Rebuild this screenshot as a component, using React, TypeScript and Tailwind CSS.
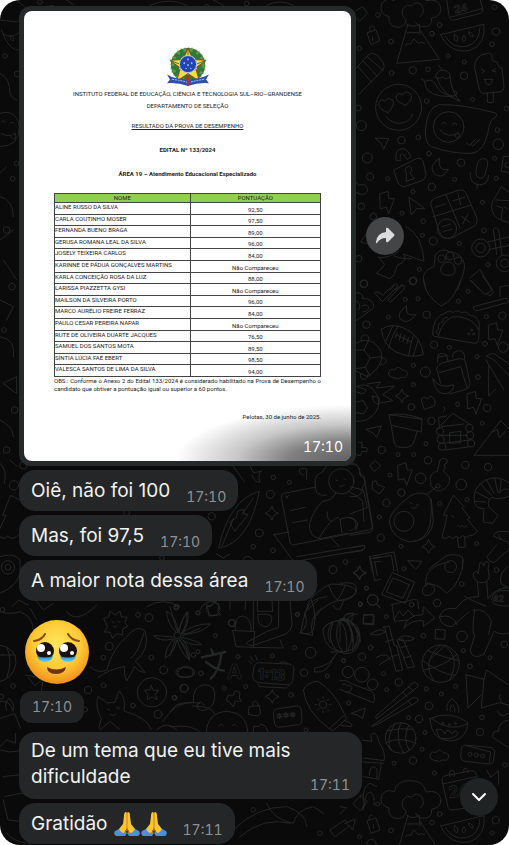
import React from "react";
import { ChevronDown } from "lucide-react";

const results = [
    ["ALINE RUSSO DA SILVA", "92,50"],
    ["CARLA COUTINHO MOSER", "97,50"],
    ["FERNANDA BUENO BRAGA", "89,00"],
    ["GERUSA ROMANA LEAL DA SILVA", "96,00"],
    ["JOSELY TEIXEIRA CARLOS", "84,00"],
    ["KARINNE DE PÁDUA GONÇALVES MARTINS", "Não Compareceu"],
    ["KARLA CONCEIÇÃO ROSA DA LUZ", "88,00"],
    ["LARISSA PIAZZETTA GYSI", "Não Compareceu"],
    ["MAILSON DA SILVEIRA PORTO", "96,00"],
    ["MARCO AURÉLIO FREIRE FERRAZ", "84,00"],
    ["PAULO CESAR PEREIRA NAPAR", "Não Compareceu"],
    ["RUTE DE OLIVEIRA DUARTE JACQUES", "76,50"],
    ["SAMUEL DOS SANTOS MOTA", "89,50"],
    ["SÍNTIA LÚCIA FAÉ EBERT", "98,50"],
    ["VALESCA SANTOS DE LIMA DA SILVA", "94,00"],
];

const Dots = ({ at }: { at: number[][] }) => (
    <>
        {at.map(([x, y, r]) => (
            <circle key={`${x}-${y}`} cx={x} cy={y} r={r} />
        ))}
    </>
);

const Bolt = ({ x, y }: { x: number; y: number }) => (
    <path d={`M${x} ${y}l24 -8 3 22 16 0 -17 46 -7 -20 -17 4z`} />
);

const Pointer = ({ x, y }: { x: number; y: number }) => (
    <path d={`M${x} ${y}l40 2 -15 32 -7 -17z`} />
);

const Spark = ({ x, y }: { x: number; y: number }) => (
    <path d={`M${x} ${y - 20}q3 15 20 20q-17 4 -20 20q-4 -16 -20 -20q16 -5 20 -20z`} />
);

const Cloud = ({ x, y }: { x: number; y: number }) => (
    <path d={`M${x} ${y}q-20 -2 -18 -16q4 -14 18 -8q10 -16 22 0q18 0 16 14q-4 12 -18 8q-8 8 -20 2z`} />
);

const Volcano = () => (
    <>
        <path d="M143 82q-30 -2 -26 -32q-32 -8 -22 -38q14 -22 38 -10q4 -34 46 -34q44 0 48 34q40 -8 46 22q0 26 -28 30q2 30 -28 26q-14 0 -20 -14" />
        <path d="M143 82q20 0 26 -22q-18 -14 -10 -34q14 -16 26 -8q12 -18 30 -2q12 22 -4 34M174 72l-34 118 128 -12 -58 -88M172 98h36M170 72q20 14 38 0l2 32M166 136q10 -10 14 -2l12 -18 12 14q10 -6 20 0" />
    </>
);

const Melon = () => (
    <>
        <path d="M272 104l130 -31q6 62 -42 78q-60 12 -88 -47zM286 109q22 38 64 30q38 -10 40 -56" />
        <path d="M314 104q14 4 8 20q-14 -2 -8 -20zM342 107q10 8 0 18q-12 -6 0 -18zM356 96q14 2 14 14q-14 0 -14 -14z" />
    </>
);

// Doodles are written on a grid three times finer than the page.
const Wallpaper = () => (
    <svg
        aria-hidden="true"
        viewBox="0 0 509 845"
        preserveAspectRatio="xMidYMid slice"
        className="absolute inset-0 h-full w-full"
        fill="none"
        stroke="#252626"
        strokeWidth="3"
        strokeLinecap="round"
        strokeLinejoin="round"
    >
        <g transform="translate(350 0) scale(.3333)">
            <Volcano />
            <Melon />
            <path d="M290 0l8 52q4 12 14 8l80 -20q10 -4 6 -14l-10 -34M300 52l96 -26" />
            <text x="314" y="40" fontSize="32" fontFamily="Inter" fontWeight="700" strokeWidth="2" transform="rotate(-10 314 40)">24</text>
            <path d="M18 32l20 -12 14 20 -24 24 -14 -16M52 98l26 -8 12 32 -26 12zM60 94q-4 -18 6 -16q10 0 8 14M68 110v12" />
            <path d="M0 224l56 -60q10 -8 24 0l20 24q6 12 -2 22l-70 72M24 200l40 46M40 184l42 44M52 170l48 42" />
            <circle cx="146" cy="322" r="69" />
            <path d="M114 338q-28 -10 -28 -26q4 -20 20 -8q6 -14 22 -4q8 16 -14 38zM168 316q-30 -10 -30 -24q4 -16 20 -8q8 -14 22 -4q14 14 -12 36zM108 350q20 22 42 20q30 -2 38 -28" />
            <path d="M214 236l12 8q18 -10 30 8q12 30 50 36q12 2 16 -6q-2 -10 -12 -10M224 244q-2 36 50 44l32 2M256 232q4 -20 20 -22l-10 -14M276 210q20 0 24 18q2 44 30 76q-54 -20 -70 -72q12 8 18 -2q10 12 22 0" />
            <path d="M374 202q-2 -36 38 -42q16 -2 14 14q0 12 16 12q2 18 14 18l6 56q0 16 -16 16l-44 4q-12 0 -14 -12zM412 278v28q8 6 18 0v-30M394 208l10 4 -8 8M438 206l-12 6 12 4M402 238h26M406 240q0 14 12 14q10 -4 8 -14" />
            <path d="M226 398q2 -74 40 -84q70 -2 166 24q14 2 6 12q-20 12 -22 38q-12 68 -50 72q-60 2 -122 -20q-18 -10 -18 -42z" />
            <circle cx="296" cy="381" r="46" />
            <path d="M276 372q6 -10 14 0M306 374q8 -10 14 0M270 390q24 28 56 8l2 12q-12 10 -14 -8M350 428l8 8 20 -18M364 434l4 4 22 -20" />
            <Pointer x={76} y={414} />
            <path d="M132 510l68 -34q16 -4 20 10l8 38q0 14 -12 18l-52 18q-14 0 -20 -12zM138 480q-4 -30 16 -34q20 -2 28 26l-12 6q-8 -18 -16 -16q-6 4 -2 20zM170 502q10 -8 14 2q4 8 -4 14l12 18 -24 8 2 -24q-10 -8 0 -18z" />
            <path d="M268 476q-34 20 -16 44q22 22 44 -12q-34 8 -28 -32zM380 500q4 -26 22 -24q14 2 10 24l-8 26q-6 14 -20 6q-10 -6 -4 -32zM360 518q0 36 28 36q26 2 28 -28M384 554l-4 12" />
            <path d="M478 468l-18 2 -6 44 24 4M470 486l-6 14 14 4M478 578l-24 -18 -16 28q-18 20 -12 44q8 28 52 36M436 600l42 2M440 618l18 6 -4 30M462 620l10 6" />
            <Bolt x={90} y={582} />
            <path d="M178 592l46 34 -24 0 -16 18z" />
            <path d="M242 610q0 -10 14 -16l72 -24q16 -2 22 14l30 68q6 20 -10 28l-66 34q-24 8 -36 -18zM288 584l42 100M250 650l112 -34M256 622l30 -10M310 602l34 -10M324 580l8 34M334 648l26 20M354 642l-16 30" />
            <circle cx="291" cy="686" r="29" />
            <path d="M276 680l26 -8M280 694l26 -6M168 680q50 26 54 104l-62 -22q16 20 -18 34q-10 36 -24 40l-38 -16q14 -12 24 -26l-18 -22q30 4 60 -18M134 768q18 10 50 8M52 696l-20 30 20 6" />
            <path d="M228 870l-8 -38q4 -24 32 -32l4 -36q20 -22 40 -10q40 4 48 40q0 24 -22 76" />
            <path d="M292 786q16 -2 22 16q6 22 -14 24q-28 2 -28 -18q4 -18 20 -22zM358 836l32 -28 36 62M364 842l24 28M120 870l14 -14M136 870l20 -16" />
            <circle cx="300" cy="768" r="12" />
            <circle cx="275" cy="776" r="11" />
            <circle cx="324" cy="782" r="11" />
            <circle cx="392" cy="744" r="27" />
            <circle cx="392" cy="744" r="14" />
            <circle cx="464" cy="790" r="25" />
            <circle cx="464" cy="790" r="12" />
            <path d="M414 726l64 -16M420 748l56 -12M440 764l-10 -76q10 -10 16 2l10 74M18 546l8 10q20 -8 26 10q2 14 -14 18l-20 -6" />
            <Dots at={[[84,45,7],[123,125,7],[28,145,7],[269,75,7],[246,101,7],[438,95,11],[426,133,7],[294,168,6],[343,186,6],[342,227,11],[188,211,11],[234,208,7],[125,219,7],[230,303,7],[368,298,6],[34,377,15],[25,324,9],[154,421,11],[205,412,7],[52,474,15],[237,461,7],[333,488,11],[445,433,16],[442,390,7],[60,530,11],[113,536,6],[245,561,11],[314,538,6],[189,575,6],[34,619,10],[156,640,6],[397,607,6],[220,664,7],[70,650,10],[434,475,6],[250,723,12],[217,706,6],[328,730,6],[402,691,7],[26,776,10],[208,808,6],[188,844,11],[41,852,11],[414,794,6],[439,535,6],[470,326,7],[434,22,7]]} />
        </g>

        <g transform="translate(350 280) scale(.3333)">
            <path d="M74 38q8 -8 24 8l36 -34q14 0 6 10l-42 42zM114 58l42 -42q12 0 6 12l-40 38zM220 0q6 50 54 78q38 -16 58 -78M360 0l46 44 22 -14 -30 -42M410 40l10 8 10 -12M370 80l100 -26 8 12 -96 26q-12 0 -12 -12zM450 50v-30l28 -4" />
            <path d="M170 78q-30 20 -20 38q20 22 48 -12q-36 6 -28 -26zM94 148q30 -22 72 -2q48 24 54 78q-40 12 -82 -8q-40 -22 -44 -68zM128 138q-10 18 -22 52M146 138q-20 24 -30 66M190 168q-8 20 -14 60M204 182l-14 46M138 164l46 22M142 158l-6 14M154 160l-6 20M164 166l-6 20M176 172l-6 18" />
            <path d="M248 160q0 -50 40 -62q10 -10 22 0q12 -10 24 0q18 -6 26 8q24 2 28 26l-2 46q0 12 -12 12l-116 -20q-12 0 -10 -10zM264 170q18 -66 62 -60q46 6 60 40M266 166q-14 -10 0 -20q-6 -16 12 -20q0 -14 14 -14" />
            <path d="M260 264q4 -14 28 -18l40 -10q16 -2 20 16l12 58q0 14 -18 20l-44 12M260 266l12 44M268 278l64 -18 20 66M262 248l2 -22q14 -12 26 0l4 18M264 232l28 -6M308 232q-4 -14 16 -20q22 -2 20 26M248 296q22 34 62 18q4 18 -18 26q-34 10 -44 -44z" />
            <path d="M18 38q24 0 20 18q16 -4 28 10q10 10 0 22l-48 34M36 78q14 -8 20 4q2 10 -18 14M18 62q18 10 8 28" />
            <path d="M18 190q30 -18 56 0q30 26 18 56q-10 26 -40 44l-34 -16M18 210l24 0 18 24 -14 28 -28 4M42 210l12 -26M60 234l34 -4M46 262l14 26M34 184q-4 -20 12 -20q16 4 8 22M94 234q18 -2 14 12q-6 10 -18 6M32 280q-4 20 10 18q12 -2 10 -14" />
            <Cloud x={134} y={294} />
            <path d="M18 320q26 -12 48 4q36 40 10 74q-20 28 -58 26M20 366l20 -4 12 22 -12 18 -22 -4M68 348l20 6 -2 20 -14 -8zM22 320l28 10 -12 12 -18 -6M52 312l40 -6 -14 18 56 -6 -36 26 30 18 -40 8" />
            <Spark x={156} y={348} />
            <path d="M214 362q2 -18 18 -6q12 -12 20 0q8 20 -4 24l-24 8zM408 230q20 -18 34 -2l36 24M408 240l54 90M416 256v92l20 -20M412 230q20 6 30 20l36 38" />
            <path d="M118 404l98 14 -2 38 -90 -20zM118 404q40 -8 98 12M124 438l8 48q2 14 18 16h24q14 -4 18 -16l10 -34M268 446l-2 -34 24 -4M280 396q10 -10 0 -16M260 448l48 -48 54 34M274 440l68 -8M276 466h76M278 490l80 -10M286 510l76 -10M300 458l32 -4v34l-32 2zM372 526l80 -104 32 32M374 526h110M428 456l14 -8 6 26 18 -20" />
            <circle cx="270" cy="454" r="11" />
            <circle cx="272" cy="478" r="11" />
            <circle cx="276" cy="500" r="11" />
            <circle cx="358" cy="444" r="11" />
            <circle cx="360" cy="466" r="11" />
            <circle cx="363" cy="490" r="11" />
            <path d="M48 448l46 -10 -14 34 -10 -12zM26 486l12 4 -4 12 18 2 -2 12 -14 -2 -4 14 -12 -4M60 556l16 -14 16 16 -18 16zM68 606l10 -4 4 12 22 8 -16 20 -20 -14zM0 552q30 -2 30 30q16 4 14 18l24 148q-2 10 -16 10l-52 8M0 620l40 10 12 52 -52 20M0 714q18 4 18 20q0 16 -18 18M0 804l44 -8q2 14 -10 16l-34 6" />
            <Bolt x={144} y={556} />
            <Bolt x={352} y={342} />
            <Bolt x={416} y={136} />
            <path d="M240 596q4 -20 22 -22l8 -34q10 -10 22 0l-2 10 -8 4 4 10 -6 8 18 20q4 20 -14 34q-18 14 -34 0q-10 -8 -8 -20z" />
            <circle cx="264" cy="618" r="6" />
            <path d="M232 642l28 -22M184 646q40 -18 56 8q8 20 0 80q-12 50 -60 52q-54 -10 -62 -60q0 -34 66 -80zM196 784q48 -10 54 -60q-4 -40 -6 -66M180 668l6 2M200 674l6 2M184 682q8 8 16 0" />
            <circle cx="162" cy="724" r="30" />
            <path d="M310 646l-30 60 12 0 -16 66q14 8 22 -4q10 14 20 0q10 12 20 -2q10 12 20 0q10 4 24 -12l-30 -36 8 -4 -24 -30 4 -4zM322 772l4 30h20l-2 -32M304 706l8 6M324 736q8 10 12 0q6 10 14 2" />
            <path d="M478 608q-40 -26 -74 -6q-40 24 -30 66q4 18 28 18l-2 40 28 4 16 -24 -28 -26q-4 -20 10 -28q18 10 52 -4M390 610l34 36M410 600l22 40M434 596l10 42M454 600l-4 36M378 636l38 20M374 664l32 2M448 640q12 -20 30 -10" />
            <path d="M430 768q4 -20 48 -12M430 768l46 20q8 22 -10 30l-34 30q-14 0 -22 -16l30 -38M446 764l8 16M58 830l74 -14 12 60M70 836l54 -10 8 46M58 830l10 46M174 842l42 2 -18 24zM238 866l50 -38q26 -10 50 4v36" />
            <circle cx="302" cy="860" r="18" />
            <Spark x={236} y={800} />
            <Dots at={[[42,11,11],[190,2,11],[166,58,6],[204,56,6],[325,64,6],[354,34,6],[49,134,11],[115,111,6],[230,104,11],[252,194,11],[298,202,6],[409,110,6],[457,107,11],[405,191,7],[460,202,15],[190,256,6],[226,276,15],[190,314,6],[384,291,7],[381,230,6],[184,381,10],[323,373,6],[411,384,11],[397,430,6],[244,423,11],[228,491,6],[95,510,11],[144,524,6],[191,524,6],[234,541,11],[346,555,11],[414,561,11],[120,585,6],[212,595,16],[334,614,16],[154,638,11],[109,669,11],[88,711,6],[269,671,6],[351,659,6],[92,773,11],[153,799,6],[380,791,6],[365,150,3],[356,162,3],[371,162,3]]} />
        </g>

        <g transform="translate(340 560) scale(.3333)">
            <path d="M158 38l66 28 -28 64 -70 -26zM160 54l48 20 -20 40 -48 -18zM156 134l68 -16q12 0 10 12l2 16M156 134l8 50 38 -4M162 178l16 -26 12 16 14 -18 18 18M192 204q8 -40 56 -40l2 -24 34 34 -34 26v-18q-34 -4 -58 22z" />
            <circle cx="215" cy="134" r="7" />
            <circle cx="98" cy="120" r="16" />
            <path d="M110 132l12 12M258 78q-10 -60 70 -72M258 72q34 -4 62 28q44 -30 50 -100M254 78q12 -18 22 -2q14 8 4 22q-10 12 -26 8q-14 -12 0 -28" />
            <path d="M400 42q10 -18 14 0l6 -34q10 -4 10 10l8 -14q14 4 6 20l4 26q-4 18 -20 18q-28 0 -28 -26zM412 66l4 44q-40 0 -54 20l-14 16q-40 -6 -50 24q6 30 38 30l50 -44M440 64l4 52q20 -30 60 -34M404 148q-10 70 0 80l-14 44q10 30 42 10l30 -68q30 14 46 4M372 108q40 22 66 30M400 150q40 -6 54 34l-8 40M300 170q40 -10 52 26" />
            <text x="458" y="126" fontSize="26" fontFamily="Inter" fontWeight="600" strokeWidth="2">42</text>
            <path d="M454 120q4 -24 26 -28h28M456 126q10 14 52 12M504 20q-30 20 -20 52l20 12" />
            <path d="M72 166l30 -2 0 30 -32 -2zM288 208l28 2 -2 28 -28 -2z" />
            <path d="M0 176q30 -4 40 18q34 48 6 76q-20 18 -46 6M0 184q24 16 20 90M14 180q34 30 24 92M12 180q-4 -20 28 -20M0 70q50 -8 50 16q-4 34 -50 36" />
            <path d="M130 202l18 -4 14 58 8 2 18 72 -20 4 -34 -132zM136 246l24 -8M154 290l22 -6M92 222q30 -22 44 -6q-20 14 -44 6zM172 240l16 -4 36 84 -20 4zM184 262l18 -4M192 294l22 -6M176 234q20 -14 48 2q-20 12 -46 4M110 292q30 -18 42 6M118 314l32 -20" />
            <circle cx="302" cy="311" r="56" />
            <path d="M264 272q44 20 92 30M250 302q50 40 94 44M302 255q-60 50 -20 108M314 256q50 40 14 106M270 298l46 -42M252 330q60 -10 98 -46" />
            <circle cx="24" cy="336" r="17" />
            <circle cx="66" cy="344" r="22" />
            <circle cx="98" cy="373" r="16" />
            <path d="M0 362q20 -4 36 10l60 22q14 20 4 34l-100 -40M8 374q10 -4 14 4q12 -4 14 6q-4 14 -20 12M378 344l54 14 8 -28 64 44M378 344l6 100 40 -40M432 358l-8 86 54 -16 28 8M480 404q-10 20 26 34" />
            <path d="M108 468l112 -100q14 -2 14 12l-124 96zM96 498l124 -86q16 -2 14 12l-120 68zM206 380l14 14M188 396l14 14M204 422l12 14M34 460l42 -16 -8 32 -14 -10z" />
            <path d="M270 476q60 -28 114 12q-4 44 -40 54q-70 6 -74 -66zM278 478q50 40 104 14M322 452q-8 -20 14 -36q26 20 20 42M330 454q0 -16 8 -20q10 10 6 22M290 508q20 -4 24 14q10 -22 22 0q10 -16 18 -2q-10 22 -54 14z" />
            <circle cx="182" cy="534" r="46" />
            <path d="M142 512q40 -10 78 -4M138 548q40 -20 90 2M182 488q-20 50 10 92M164 492q-30 50 -10 80M206 496q-20 40 2 76" />
            <path d="M66 540l30 4 -4 -18q10 -12 18 0l8 22q20 30 14 54l-60 -8M70 606l62 4M124 612l-8 46 -46 -8M88 646q0 -26 14 -26q14 4 8 34" />
            <Cloud x={288} y={602} />
            <path d="M364 568q2 -14 16 -12l70 6q14 2 14 14l-4 28q-4 10 -14 8l-72 -8q-12 -2 -12 -12zM376 556l76 20 -4 32M504 460q-20 20 -32 -8M504 480q-30 8 -28 34q-20 -4 -18 18l46 30" />
            <circle cx="390" cy="583" r="6" />
            <circle cx="409" cy="585" r="6" />
            <circle cx="428" cy="588" r="6" />
            <path d="M306 660q0 -14 20 -14l66 -14q16 0 18 14l10 70M306 660l18 82q4 10 16 8l60 -10M308 672l100 -22M330 650q-6 -22 8 -18q8 4 4 18M372 638q-4 -18 8 -12q6 4 4 12M440 630l12 22 24 -20v40" />
            <text x="328" y="714" fontSize="48" fontFamily="Inter" fontWeight="700" strokeWidth="2" transform="rotate(-8 328 714)">24</text>
            <path d="M40 730l20 -22 22 16 -20 28zM60 712q0 -14 12 -4M0 740l20 4 -20 18M14 790l32 -12 -8 32 -10 -14M82 782l26 -8 12 36 -26 10zM88 778q-4 -16 8 -12M100 794v10" />
            <g transform="translate(30 694)">
                <Volcano />
                <Melon />
            </g>
            <Spark x={59} y={40} />
            <Dots at={[[192,26,6],[80,85,6],[61,132,6],[139,170,6],[291,129,11],[365,72,7],[470,30,7],[366,229,16],[250,227,7],[370,272,6],[493,253,10],[450,293,6],[390,319,7],[92,263,7],[66,290,11],[11,302,6],[131,341,6],[176,367,11],[140,389,6],[259,387,6],[347,379,6],[304,402,6],[267,438,12],[206,473,6],[237,477,11],[426,472,7],[420,516,11],[255,518,6],[246,568,6],[162,610,6],[219,602,11],[283,639,6],[299,762,7],[113,732,6],[153,811,7],[58,831,6],[276,788,7],[467,781,11],[456,819,6],[26,429,6],[495,615,7],[308,490,3],[328,494,3],[346,490,3],[94,852,14]]} />
        </g>

        <g transform="translate(170 600) scale(.3333)">
            <path d="M110 14l12 6 10 -14 14 10 -2 20 8 8 -26 4 -14 -12zM188 92l66 2 -4 48 90 2 -10 -24M188 92l10 48 52 2M196 92q-4 -44 22 -44q26 4 26 46M250 0v90M262 0v34h46l-2 -34M264 44q40 -6 42 10q-2 26 -22 26q-22 -2 -20 -36M360 0l6 70q0 24 -24 34l-92 32q-26 0 -18 -10l60 -32 34 -12 0 -82" />
            <path d="M0 20l20 70M24 94q14 -38 26 -58q4 34 -16 64M34 98q50 -30 88 -26q-30 32 -88 30M34 112q40 8 62 22q-36 4 -66 -18M26 118q28 20 30 60q-26 -22 -34 -58M16 118l-16 50" />
            <circle cx="22" cy="106" r="10" />
            <path d="M96 172l70 -16M124 148l6 16M154 164q-6 50 -32 72M108 186q30 24 54 26" strokeWidth="7" />
            <text x="170" y="238" fontSize="62" fontFamily="Inter" fontWeight="700" strokeWidth="2">A</text>
            <path d="M252 200q4 -12 16 -12l90 4q14 4 14 18l-4 32q-4 14 -18 12l-84 -6q-18 -4 -18 -20zM264 252l4 8 82 4 8 -8M330 188q14 -8 24 4M256 166l6 14M242 170l8 14M236 184l10 8" />
            <text x="262" y="236" fontSize="44" fontFamily="Inter" fontWeight="800" strokeWidth="2" transform="rotate(4 262 236)">1:13</text>
            <path d="M460 100q-10 -30 60 -42q50 10 50 50q-4 44 -50 48q-54 -4 -60 -56zM488 70q-20 50 14 84M508 62q-22 50 10 94M526 60q34 40 8 92M544 66q34 36 8 80M514 58q20 10 34 0q-10 -14 14 -16M482 156h36M500 160q-20 40 -66 44v12q40 6 56 -44" />
            <path d="M390 98q30 -20 14 -60l40 -38M390 98l38 8q-14 -50 24 -80" />
            <Cloud x={36} y={230} />
            <path d="M0 336q30 -30 70 -28q-4 -50 34 -54q34 2 30 36q0 34 -34 42q-20 0 -18 -20q10 -14 20 4M68 318q60 0 66 24M0 380q70 -10 100 24M108 400q4 -64 64 -66q60 4 62 66M146 378q8 -10 14 0M186 378q8 -10 14 0" />
            <path d="M176 286l14 0 6 -14 14 6 -2 16 6 10 -18 0 -6 16 -10 -12 -10 -6zM238 320l30 -4 4 26 -8 6 -28 -4zM248 318q-2 -16 8 -14q10 2 8 14M310 340q0 -12 14 -14l56 -8q14 0 14 14l2 30q0 12 -14 12l-54 8q-12 0 -14 -10z" />
            <text x="320" y="370" fontSize="40" fontFamily="Inter" strokeWidth="2" transform="rotate(-6 320 370)">***</text>
            <path d="M400 270q10 -24 44 -26q50 30 80 100l-46 42q-70 -50 -78 -116zM478 386l12 6 40 -36 -6 -12M524 362q30 8 20 18l-30 -4" />
            <circle cx="459" cy="314" r="11" />
            <path d="M459 290v6M459 332v6M435 314h6M477 314h6M442 297l5 5M472 327l5 5M476 297l-5 5M442 331l5 -5M250 396l2 -18 14 2 6 -8 14 6 8 18" />
            <Spark x={307} y={290} />
            <Dots at={[[19,24,6],[84,38,6],[383,43,6],[187,69,11],[136,107,6],[84,155,6],[204,170,6],[307,168,6],[374,143,6],[422,158,16],[93,220,7],[402,218,11],[472,228,6],[227,260,6],[162,264,6],[43,265,12],[13,293,6],[363,285,7],[521,182,6],[408,390,6],[571,14,6]]} />
        </g>

        <g transform="translate(180 462) scale(.3333)">
            <path d="M238 88q-90 24 -122 170q92 -14 122 -170zM220 108l-34 48M160 170l-34 82M150 180l20 -14 2 -18 18 -6 2 14 12 2 -40 50 -8 -14zM150 0l44 60M210 10l10 22 24 -4M216 40q8 24 24 20q-8 -20 4 -34M358 24q10 -10 22 -2v30M358 24q0 16 14 14" />
            <path d="M404 76l-92 18q-10 2 -8 12l26 134q2 10 14 8l222 -44q12 -2 12 -14l-22 -120M332 146l44 -10M338 182l44 -8M318 102l6 8M326 100l-8 8" />
            <circle cx="484" cy="58" r="38" />
            <path d="M440 100q-36 4 -34 -28q-6 -34 20 -40q16 -36 60 -32q60 -4 54 40q26 14 8 36q0 32 -38 28M468 92q-10 24 -40 26q-30 30 -40 70q0 34 30 42l84 -16M508 90q30 14 40 28l4 60M442 150q-4 20 12 28M416 230q34 -60 60 -64M480 172l6 40M480 172q40 -16 54 12l-6 20M468 54l4 2M492 50l4 2M478 72q10 4 14 -4" />
            <path d="M282 218l44 -8M282 218l56 76q10 6 22 2l188 -32q8 -4 6 -14l-204 34M456 230l22 24M572 290l28 -6M572 290l12 66 18 -4M582 300l18 -2M584 300l8 40" />
            <path d="M362 512q14 -80 34 -106q34 -34 60 -40q56 0 74 20q-8 22 -40 26q-56 10 -84 52l-6 40q-12 18 -38 8zM446 370q10 30 26 44q10 -10 24 -44M394 414q10 20 10 56M460 430q4 14 20 12l10 -24" />
            <path d="M430 500q10 -24 60 -24q50 10 52 64M458 480q-24 30 -8 60M480 476v64M504 480q18 30 14 60M488 476q4 -30 36 -20q-20 6 -24 22" />
            <circle cx="578" cy="414" r="16" />
            <path d="M588 426l12 12M552 458l28 0 -2 28 -26 -2zM84 434l10 -4 10 -10 12 6 4 20 -10 12 -22 4zM110 276l20 12 20 -12M190 292q10 -20 28 0" />
            <Spark x={539} y={332} />
            <Spark x={276} y={154} />
            <Dots at={[[271,97,12],[238,213,12],[220,254,7],[279,265,7],[280,46,7],[328,61,6],[95,163,11],[459,323,12],[496,300,7],[559,378,6],[541,426,6],[404,369,7],[54,453,6],[352,457,6],[155,483,10]]} />
        </g>

        <g transform="translate(0 605) scale(.3333)">
            <path d="M270 186q20 20 50 10q20 -70 60 -100q30 -40 56 -18q14 60 -30 90l30 34q-20 0 -32 -18q-8 20 -24 44q-10 -20 -6 -44q-50 10 -80 34M392 160q20 -10 40 -76" />
            <path d="M312 40l14 -4 4 -18 16 12 14 -12 4 18 18 0 -8 16 10 12 -16 8 0 18 -18 -4 -12 14 -8 -18 -18 -2 10 -14zM336 50l6 4M354 48l6 4M340 64q8 6 12 -2" />
            <path d="M528 82q-28 -30 -28 -64q32 20 34 64M538 80q6 -40 26 -60q4 34 -16 66M548 92l52 -22M520 96q-50 -4 -60 -4q20 20 58 10M522 102q-26 24 -26 58q30 -20 34 -54M540 106q20 30 28 60q6 -30 -20 -62" />
            <circle cx="456" cy="262" r="44" />
            <path d="M454 242l6 14 16 0 -10 12 6 16 -16 -8 -14 8 2 -16 -10 -12 16 -2zM296 370l8 -30q-20 -30 -10 -66l28 20 22 -2 14 -34q20 20 14 60q70 20 82 56M322 312l8 4M350 308l8 2M330 328q10 8 18 -2M488 350l40 -50q40 -14 72 -4M534 200q10 -20 22 -12q20 -8 24 12q-4 24 -24 16q-26 8 -22 -16z" />
            <path d="M0 20q30 10 60 0q40 16 40 56M0 120q50 10 48 54q-8 46 -48 56M0 150h46M20 126q20 40 0 94M76 210l54 10 -6 38M84 216l20 26 26 -20M0 290q30 -8 40 30M20 316q-10 -20 8 -36q18 20 12 36M0 340l44 -14 18 44M90 10l20 34M200 20q30 40 90 -20" />
            <Dots at={[[414,30,7],[447,38,12],[328,124,12],[310,158,7],[454,158,7],[491,195,12],[580,150,7],[264,255,11],[311,241,7],[552,250,12],[524,278,7],[474,328,12],[399,302,7],[256,314,7],[39,243,7],[8,14,7],[4,275,7],[529,8,7]]} />
        </g>

        <g transform="translate(0 460) scale(.3333)">
            <path d="M60 120l-28 -14 -24 60 10 0 -18 40M0 230q14 10 22 -2q14 12 28 2l10 -10M0 10q24 20 12 60M30 0l22 20M0 290q40 -14 60 10l0 60M0 400q50 -20 60 -60M36 440l20 -20 30 16M110 424l20 26 30 -20M440 440q50 -30 100 0M600 450q10 -30 50 -26M690 450v-28h46v28M920 450q10 -36 60 -40" />
            <circle cx="24" cy="322" r="20" />
            <circle cx="24" cy="322" r="9" />
            <Dots at={[[70,16,11],[42,76,14],[380,158,9],[486,294,7],[530,440,7]]} />
        </g>

        <g transform="scale(.3333)">
            <path d="M0 60l50 6q30 -10 30 -40l-30 -26M4 90q24 70 60 60M8 100q20 20 50 -2M32 108q14 4 8 14q-12 -2 -8 -14M0 220q30 14 30 60q10 20 20 20M0 340q50 -14 58 40q0 60 -58 60M4 366q6 -8 12 0M30 370q6 -8 12 0M4 400q20 14 42 0l0 14q-10 8 -14 -6M0 520l20 -20M0 590q40 10 40 60M0 720l40 -30M10 780l40 60M0 900l40 20 -20 40M0 1010q50 10 40 60M10 1150l40 -20v50zM0 1260q40 20 40 50M80 30l80 -14M200 0l20 14M450 16q60 -26 110 0M640 0l30 16M800 16q40 -20 80 0" />
            <Dots at={[[15,168,7],[52,222,9],[38,536,7],[50,490,7],[20,690,10],[36,860,10],[12,990,7],[44,1230,10],[20,1350,10],[120,6,7],[620,20,7],[740,10,7]]} />
            <path d="M0 2240l20 -20 26 10 0 -30M0 2250q60 20 80 -20M10 2330l90 -10M14 2390l100 -20M10 2400l14 60 150 20M20 2500q40 50 160 20M300 2190l30 -26 30 26M470 2190q30 -30 60 0" />
            <path d="M700 2490q70 -70 160 -70q60 20 60 60M720 2510q70 -60 150 -40M800 2410q20 50 80 60q10 -40 60 -50l30 20M990 2490l46 -30 10 20 -40 30zM1090 2430v-20q-4 -50 20 -60l20 10M1094 2420q0 -40 16 -44q16 6 12 40" />
            <Dots at={[[760,2430,7],[960,2500,7]]} />
        </g>
    </svg>
);

const Crest = () => (
    <svg viewBox="0 0 46 42" className="h-10 w-11" role="img" aria-label="Brasão da República">
        <circle cx="23" cy="19" r="18" fill="none" stroke="#c9cfbf" strokeWidth="2" strokeDasharray="2 2" />
        <circle cx="23" cy="19" r="14" fill="none" stroke="#2f7a33" strokeWidth="8" />
        <circle cx="23" cy="19" r="16" fill="none" stroke="#5c9a45" strokeWidth="3" strokeDasharray="3 4" />
        <path d="M23 1l5 12 14 1-11 8 4 14-12-8-12 8 4-14L4 14l14-1z" fill="#f1df3a" stroke="#a8342a" strokeWidth="1" />
        <path d="M23 2v34M4 14l26 10M42 14L16 24" stroke="#2f7a33" strokeWidth="1" />
        <path d="M1 29q8 5 21 5 14 0 23-5l-3 5 3 4q-11-1-22 3Q12 37 1 38l3-4z" fill="#2b50ae" />
        <path d="M6 34q10 1 16 3M40 34q-8 1-15 3" stroke="#c3d0f0" strokeWidth="1" fill="none" strokeDasharray="2 1" />
        <path d="M23 30v11M21 33h4" stroke="#c02c2c" strokeWidth="2" />
        <circle cx="23" cy="18" r="9" fill="#1d45b5" stroke="#c3d0f0" strokeWidth="1" />
        <path d="M23 12v2M19 16v2M27 16v2M23 18v2M21 22v1M26 22v1" stroke="#fff" strokeWidth="1" />
    </svg>
);

const TearyFace = () => (
    <svg viewBox="0 0 66 66" className="size-[66px]" role="img" aria-label="Rosto segurando as lágrimas">
        <defs>
            <radialGradient id="skin" cx=".5" cy=".38" r=".62">
                <stop offset="0" stopColor="#ffe75c" />
                <stop offset=".6" stopColor="#fdc935" />
                <stop offset="1" stopColor="#f08d1b" />
            </radialGradient>
            <linearGradient id="tear" x1="0" y1="0" x2="0" y2="1">
                <stop offset="0" stopColor="#1b87c9" />
                <stop offset="1" stopColor="#6fd0f5" />
            </linearGradient>
        </defs>
        <circle cx="33" cy="33" r="32" fill="url(#skin)" />
        <path d="M10 22q8-1 11-7M55 22q-8-1-11-7" fill="none" stroke="#8a4b10" strokeWidth="2" strokeLinecap="round" />
        <circle cx="21" cy="32" r="9" fill="#1a1210" />
        <circle cx="44" cy="32" r="9" fill="#1a1210" />
        <path d="M13 37q8 3 16 0q-2 6-8 6t-8-6zM36 37q8 3 16 0q-2 6-8 6t-8-6z" fill="url(#tear)" />
        <circle cx="17" cy="29" r="4" fill="#fff" />
        <circle cx="40" cy="29" r="4" fill="#fff" />
        <circle cx="25" cy="34" r="2" fill="#fff" />
        <circle cx="48" cy="34" r="2" fill="#fff" />
        <path d="M23 48q9 5 19 0q-1 7-10 7t-9-7z" fill="#6e3410" />
    </svg>
);

const PrayingHands = () => (
    <svg viewBox="0 0 26 26" className="size-[26px]" role="img" aria-label="Mãos em oração">
        <path d="M1 20l6-3 6 5-2 3H2q-3-2-1-5zM25 20l-6-3-6 5 2 3h9q3-2 1-5z" fill="#4a90dc" />
        <path d="M12 1q-2 0-2 4L9 13l-4 5q2 4 5 4l3-5 3 5q3 0 5-4l-4-5-1-8q0-4-2-4l-1 1z" fill="#fdc62f" />
        <path d="M13 2v16l-2 4M13 18l2 4" fill="none" stroke="#c97f14" strokeWidth="1" />
    </svg>
);

const Time = ({ children }: { children: string }) => (
    <time className="text-sm leading-5 text-[#8f9193] tabular-nums">{children}</time>
);

const Bubble = ({ time, children }: { time: string; children: React.ReactNode }) => (
    <div className="flex w-fit items-end gap-4 rounded-2xl bg-[#242627] px-3 pb-1">
        <p className="pt-2 pb-1 text-[19px] leading-[25px] text-[#f1f2f2]">{children}</p>
        <Time>{time}</Time>
    </div>
);

const Sheet = () => (
    <div className="relative flex flex-col items-center overflow-hidden rounded-lg bg-white px-[30px] pt-9 pb-10 font-['Roboto','Open_Sans',sans-serif] text-[6px] leading-[8px] text-[#222]">
        <div className="absolute right-0 bottom-0 h-14 w-44 bg-[radial-gradient(ellipse_100%_100%_at_bottom_right,rgba(0,0,0,.62)_0%,rgba(0,0,0,.5)_35%,rgba(0,0,0,.22)_65%,rgba(0,0,0,0)_100%)]" />
        <Crest />
        <p className="mt-[3px] whitespace-nowrap">
            INSTITUTO FEDERAL DE EDUCAÇÃO, CIÊNCIA E TECNOLOGIA SUL–RIO–GRANDENSE
        </p>
        <p className="mt-1">DEPARTAMENTO DE SELEÇÃO</p>
        <p className="mt-3 underline">RESULTADO DA PROVA DE DESEMPENHO</p>
        <p className="mt-4 font-bold">EDITAL Nº 133/2024</p>
        <p className="mt-4 font-bold">ÁREA 19 – Atendimento Educacional Especializado</p>
        <table className="mt-[15px] h-[184px] w-full table-fixed border-collapse">
            <thead>
                <tr className="bg-[#8fd14f]">
                    <th className="w-[51%] border border-[#444] p-0 font-normal">NOME</th>
                    <th className="border border-[#444] p-0 font-normal">PONTUAÇÃO</th>
                </tr>
            </thead>
            <tbody>
                {results.map(([name, score]) => (
                    <tr key={name}>
                        <td className="border border-[#444] p-0 align-top whitespace-nowrap">{name}</td>
                        <td className="border border-[#444] p-0 text-center align-bottom">{score}</td>
                    </tr>
                ))}
            </tbody>
        </table>
        <p className="w-full text-justify">
            OBS.: Conforme o Anexo 2 do Edital 133/2024 é considerado habilitado na Prova de Desempenho o
            candidato que obtiver a pontuação igual ou superior a 60 pontos.
        </p>
        <p className="relative mt-5 w-full text-right">Pelotas, 30 de junho de 2025.</p>
        <time className="absolute right-2 bottom-1 font-['Inter',sans-serif] text-sm leading-5 text-white tabular-nums">
            17:10
        </time>
    </div>
);

const App = () => {
    return (
        <main className="relative overflow-hidden rounded-[20px] bg-[#0a0a0a] px-[19px] pt-[6px] pb-px font-['Inter','Liberation_Sans',sans-serif]">
            <Wallpaper />
            <div className="relative flex flex-col gap-1">
                <div className="flex items-center gap-[10px]">
                    <div className="w-full max-w-[337px] rounded-xl bg-[#26292a] p-[5px]">
                        <Sheet />
                    </div>
                    <button
                        type="button"
                        aria-label="Encaminhar"
                        className="flex size-[38px] shrink-0 items-center justify-center rounded-full bg-[#444546]"
                    >
                        <svg viewBox="0 0 20 18" className="h-[18px] w-5" fill="#dcdcdd">
                            <path d="M11 2q0-2 2-1l6 6q1 1 0 2l-6 6q-2 1-2-1v-3Q5 11 2 16q-1 1-1-1Q2 6 11 5z" />
                        </svg>
                    </button>
                </div>
                <Bubble time="17:10">Oiê, não foi 100</Bubble>
                <Bubble time="17:10">Mas, foi 97,5</Bubble>
                <Bubble time="17:10">A maior nota dessa área</Bubble>
                <div className="mt-[14px] flex flex-col gap-[6px] pb-[5px] pl-px">
                    <div className="pl-1">
                        <TearyFace />
                    </div>
                    <div className="flex w-fit rounded-xl bg-[#202224] px-3 py-[6px]">
                        <Time>17:10</Time>
                    </div>
                </div>
                <div className="flex w-full max-w-[343px] items-end justify-between rounded-2xl bg-[#242627] px-3 pt-[6px] pb-1">
                    <p className="max-w-[270px] pb-[5px] text-[19px] leading-[26px] text-[#f1f2f2]">
                        De um tema que eu tive mais dificuldade
                    </p>
                    <Time>17:11</Time>
                </div>
                <Bubble time="17:11">
                    <span className="flex h-[25px] items-center gap-[6px]">
                        Gratidão
                        <span className="flex gap-px">
                            <PrayingHands />
                            <PrayingHands />
                        </span>
                    </span>
                </Bubble>
            </div>
            <button
                type="button"
                aria-label="Ir para o fim"
                className="absolute right-[11px] bottom-[29px] flex size-[38px] items-center justify-center rounded-full bg-[#202324] text-white"
            >
                <ChevronDown size={24} strokeWidth={2} />
            </button>
        </main>
    );
};

export default App;
